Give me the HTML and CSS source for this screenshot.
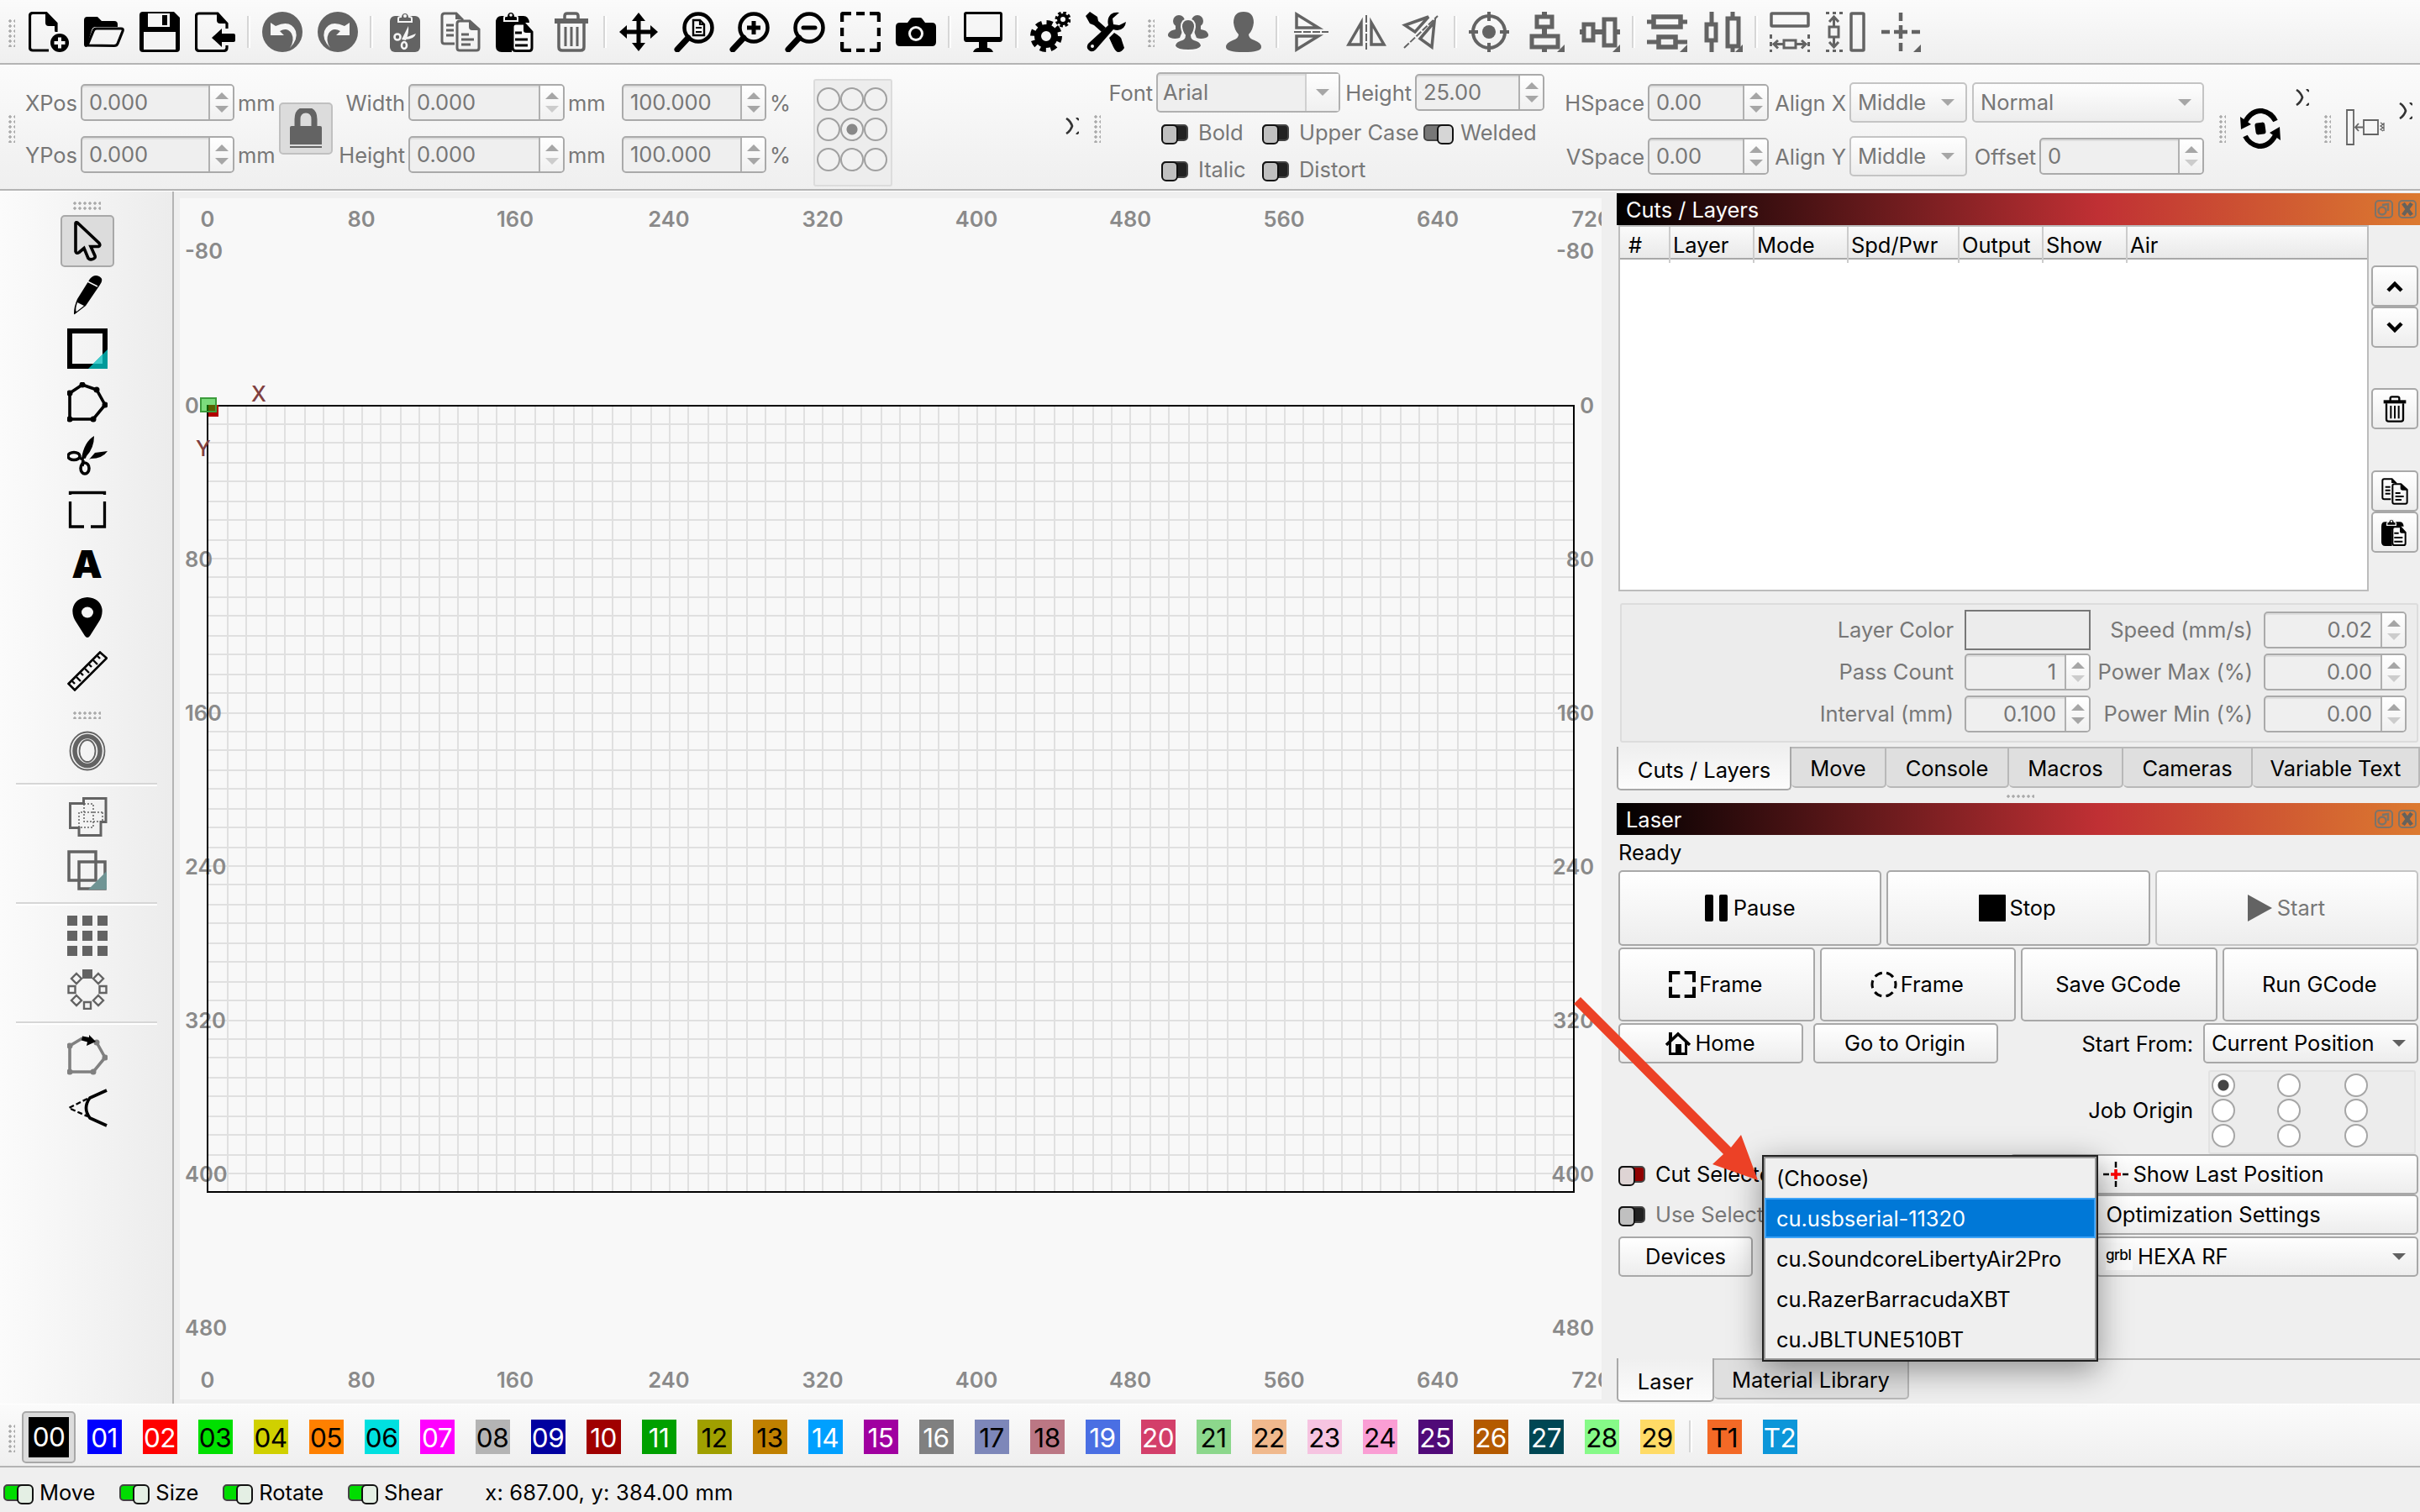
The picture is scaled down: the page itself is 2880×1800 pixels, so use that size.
FILE: index.html
```html
<!DOCTYPE html>
<html lang="en">
<head>
    <meta charset="UTF-8">
    <meta name="viewport" content="width=device-width, initial-scale=1.0">
    <title>Laser Workspace</title>
    <link rel="stylesheet" href="styles.css">
</head>
<body>
    <!-- Icon sprite -->
    <svg class="sprite" width="0" height="0">
        <symbol id="i-new" viewBox="0 0 48 48"><path d="M24 46H5q-3.500 0-3.500-3.500V5q0-3.500 3.500-3.500h16L33 14v10" fill="none" stroke="currentColor" stroke-width="3.200"/><path d="M20 1l14 14v8h-3v-6H24q-4 0-4-4z"/><circle cx="37" cy="37" r="11"/><path d="M37 30.500v13M30.500 37h13" stroke="#f4f4f4" stroke-width="4"/></symbol>
        <symbol id="i-open" viewBox="0 0 48 48"><path d="M3 42Q0 42 0 39V10q0-4 4-4h12l5 5h15q4 0 4 4v3H14q-4 0-5 4z"/><path d="M4 40l7-17q1-3 4-3h29q3 0 2 3l-6 15q-1 2.500-4 2.500z" fill="none" stroke="currentColor" stroke-width="3.200"/></symbol>
        <symbol id="i-save" viewBox="0 0 48 48"><path d="M4 0h37l7 7v37q0 4-4 4H4q-4 0-4-4V4q0-4 4-4z"/><path d="M10 2h26v16H10z" fill="#f6f6f6"/><path d="M27 4h6v12h-6z"/><path d="M5 24h38v21H5z" fill="#f3f3f3"/></symbol>
        <symbol id="i-import" viewBox="0 0 48 48"><path d="M38 20V14L27 2H5Q1.500 2 1.500 5v38q0 3.500 3.500 3.500h29q4 0 4-3.500v-3" fill="none" stroke="currentColor" stroke-width="3.200"/><path d="M26 1l13 13H30q-4 0-4-4zM20 31l12-11v6h14q2 0 2 2v6q0 2-2 2H32v6z"/></symbol>
        <symbol id="i-undo" viewBox="0 0 48 48"><circle cx="24" cy="24" r="24"/><path d="M10 13v15h16l-5-5q9-5 14 3 4 8-2 17 10-10 7-20-6-14-24-6z" fill="#f5f5f5"/></symbol>
        <symbol id="i-cut" viewBox="0 0 48 48"><rect x="6" y="5" width="36" height="43" rx="6"/><path d="M16 12V8q0-2 3-2 1-5 5-5t5 5q3 0 3 2v4z" stroke="#f5f5f5" stroke-width="2"/><circle cx="24" cy="5" r="2" fill="#f5f5f5"/><path d="M20 33l8-16q1 8-3 17zM24 31l13-5q-2 7-13 7z" fill="#f5f5f5"/><g fill="none" stroke="#f5f5f5" stroke-width="2.600"><circle cx="15" cy="30" r="3.500"/><ellipse cx="23" cy="40" rx="3" ry="4"/></g></symbol>
        <symbol id="i-copy" viewBox="0 0 48 48"><g fill="none" stroke="currentColor" stroke-width="3"><path d="M17 38H5q-3 0-3-3V5q0-3 3-3h14l8 8"/><path d="M35 11H23q-3 0-3 3v29q0 3 3 3h20q3 0 3-3V21z"/><path d="M7 16h9M7 22h9M7 28h9M25 27h9M25 33h15M25 39h11"/></g><path d="M18 1l9 8h-9zM34 10l13 12H38q-4 0-4-4z"/></symbol>
        <symbol id="i-paste" viewBox="0 0 48 48"><path d="M0 13q0-8 7-8h26q6 0 7 8H26q-7 0-7 7v28H7q-7 0-7-7z"/><path d="M10 11V7q0-2 3-2 1-5 5-5t5 5q3 0 3 2v4z" stroke="#f5f5f5" stroke-width="2"/><circle cx="18" cy="4" r="1.800" fill="#f5f5f5"/><path d="M34 14H24q-4 0-4 4v25q0 3.500 4 3.500h16q3 0 3-3.500V24z" fill="#fafafa" stroke="currentColor" stroke-width="3"/><path d="M33 13l11 12h-8q-3 0-3-3z"/><path d="M23 25h8M23 33h15M23 40h15" stroke="currentColor" stroke-width="3"/></symbol>
        <symbol id="i-trash" viewBox="0 0 48 48"><path d="M16 9V5q0-3 3-3h10q3 0 3 3v4" fill="none" stroke="currentColor" stroke-width="3.500"/><path d="M4 8h40v6H4z"/><path d="M9 14v28q0 4 4 4h22q4 0 4-4V14" fill="none" stroke="currentColor" stroke-width="3.500"/><path d="M17 18v23M24 18v23M31 18v23" stroke="currentColor" stroke-width="3"/></symbol>
        <symbol id="i-move" viewBox="0 0 48 48"><path d="M24 1l8 10h-5.500v10.500H38V16l9 8-9 8v-5.500H26.500V37H32l-8 10-8-10h5.500V26.500H10V32l-9-8 9-8v5.500h11.500V11H16z"/></symbol>
        <symbol id="i-zoom" viewBox="0 0 48 48"><circle cx="29" cy="19" r="16.500" fill="none" stroke="currentColor" stroke-width="4.500"/><path d="M17 31L4 45" stroke="currentColor" stroke-width="7" stroke-linecap="round"/></symbol>
        <symbol id="i-zoomdoc" viewBox="0 0 48 48"><use href="#i-zoom"/><path d="M23 10h8l5 5v13H23z" fill="none" stroke="currentColor" stroke-width="2.400"/><path d="M26 19h7M26 24h7M31 10v5h5" stroke="currentColor" stroke-width="2.200" fill="none"/></symbol>
        <symbol id="i-zoomin" viewBox="0 0 48 48"><use href="#i-zoom"/><path d="M29 11v16M21 19h16" stroke="currentColor" stroke-width="5"/></symbol>
        <symbol id="i-zoomout" viewBox="0 0 48 48"><use href="#i-zoom"/><path d="M22 19h14" stroke="currentColor" stroke-width="5" stroke-linecap="round"/></symbol>
        <symbol id="i-frame" viewBox="0 0 48 48"><path d="M2 12V4q0-2 2-2h9M19 2h10M35 2h9q2 0 2 2v8M46 19v10M46 36v8q0 2-2 2h-9M29 46H19M13 46H4q-2 0-2-2v-8M2 29V19" fill="none" stroke="currentColor" stroke-width="4.500"/></symbol>
        <symbol id="i-camera" viewBox="0 0 48 48"><path d="M5 13h9l3-4q1-2 4-2h8q2 0 3 2l3 4h8q5 0 5 5v18q0 5-5 5H5q-5 0-5-5V18q0-5 5-5z"/><circle cx="24" cy="26" r="9" fill="#f5f5f5"/><circle cx="24" cy="26" r="6"/></symbol>
        <symbol id="i-monitor" viewBox="0 0 48 48"><path d="M4 0h40q3 0 3 3v29q0 4-3 4H29v7q5 0 7 5H12q2-5 7-5v-7H4q-3 0-3-4V3q0-3 3-3z"/><path d="M4 3h40v27H4z" fill="#f6f6f6"/></symbol>
        <symbol id="i-gears" viewBox="0 0 48 48"><circle cx="19" cy="29" r="10" fill="none" stroke="currentColor" stroke-width="8"/><circle cx="19" cy="29" r="16" fill="none" stroke="currentColor" stroke-width="6" stroke-dasharray="7 5.570"/><circle cx="39" cy="9" r="5" fill="none" stroke="currentColor" stroke-width="4"/><circle cx="39" cy="9" r="7.500" fill="none" stroke="currentColor" stroke-width="4" stroke-dasharray="3.400 2.490"/></symbol>
        <symbol id="i-tools" viewBox="0 0 48 48"><path d="M48 12q-1 9-10 10-3 0-5-1L12 45q-4 4-8 1t-1-8L27 16q-2-8 3-13 4-3 10-2l-8 7 1 7 7 1z"/><circle cx="8" cy="41" r="2" fill="#f4f4f4"/><path d="M0 5l5-5 9 6 1 5 9 8-5 5-9-8-5-2zM28 31l6-6q9 5 9 9l3 9q-3 5-7 5-3 0-6-6z"/></symbol>
        <symbol id="i-group" viewBox="0 0 48 48"><circle cx="13" cy="11" r="7"/><circle cx="35" cy="11" r="7"/><path d="M9 15h9v6L14 31q-6 2-11 0-5-2-2-6 2-3 8-4zM30 15h9v6q7 1 8 4 3 4-2 6-6 2-11 0l-4-10z"/><g stroke="#f5f5f5" stroke-width="2"><path d="M24 9q8 0 8 9-1 7-4 10 0 5 6 6 6 2 6 7-3 5-16 5T8 41q0-5 6-7 6-1 6-6-3-3-4-10 0-9 8-9z"/></g></symbol>
        <symbol id="i-user" viewBox="0 0 48 48"><path d="M24 0q12 0 12 13-1 9-6 14 0 5 7 7 8 3 8 8 0 6-21 6T3 42q0-5 8-8 7-2 7-7-5-5-6-14Q12 0 24 0z"/></symbol>
        <symbol id="i-flipv" viewBox="0 0 48 48"><path d="M7 3v16h26zM7 45V29h26z" fill="none" stroke="currentColor" stroke-width="3.500"/><path d="M4 24h41" stroke="currentColor" stroke-width="2" stroke-dasharray="9 2"/></symbol>
        <symbol id="i-fliph" viewBox="0 0 48 48"><path d="M3 39h15V13zM45 39H30V13z" fill="none" stroke="currentColor" stroke-width="3.500"/><path d="M24 4v41" stroke="currentColor" stroke-width="2" stroke-dasharray="9 2"/></symbol>
        <symbol id="i-flipd" viewBox="0 0 48 48"><path d="M4 16l28-10-16 18zM36 42l3-30-17 20z" fill="none" stroke="currentColor" stroke-width="3.500"/><path d="M3 43L43 5" stroke="currentColor" stroke-width="2" stroke-dasharray="8 2"/></symbol>
        <symbol id="i-target" viewBox="0 0 48 48"><circle cx="24" cy="24" r="19" fill="none" stroke="currentColor" stroke-width="4"/><circle cx="24" cy="24" r="8"/><path d="M24 0v11M24 37v11M0 24h11M37 24h11" stroke="currentColor" stroke-width="4"/></symbol>
        <symbol id="i-alignv" viewBox="0 0 48 48"><path d="M24 0v7M24 20v10M24 42v6" stroke="currentColor" stroke-width="6"/><path d="M15 6h18v12H15zM9 29h31v13H9z" fill="none" stroke="currentColor" stroke-width="5"/><path d="M48 39v9h-9z"/></symbol>
        <symbol id="i-alignh" viewBox="0 0 48 48"><path d="M0 24h5M17 24h10M43 24h5" stroke="currentColor" stroke-width="6"/><path d="M5 15h11v19H5zM29 9h13v31H29z" fill="none" stroke="currentColor" stroke-width="5"/><path d="M48 39v9h-9z"/></symbol>
        <symbol id="i-distv" viewBox="0 0 48 48"><path d="M0 12h8M40 12h8M0 36h14M34 36h14" stroke="currentColor" stroke-width="5"/><path d="M8 6h32v12H8zM14 30h20v12H14z" fill="none" stroke="currentColor" stroke-width="5.500"/><path d="M48 39v9h-9z"/></symbol>
        <symbol id="i-disth" viewBox="0 0 48 48"><path d="M11 0v14M11 34v14M36 0v8M36 40v8" stroke="currentColor" stroke-width="5"/><path d="M5 15h11v19H5zM30 8h13v33H30z" fill="none" stroke="currentColor" stroke-width="5"/><path d="M48 39v9h-9z"/></symbol>
        <symbol id="i-samew" viewBox="0 0 48 48"><rect x="2" y="2" width="44" height="15" rx="1" fill="none" stroke="currentColor" stroke-width="3.500"/><path d="M17 34h14v9H17zM4 38.500h13M31 38.500h13M10 34l-5 4.500 5 5M38 34l5 4.500-5 5" fill="none" stroke="currentColor" stroke-width="3"/><path d="M1.500 27v21M46.500 27v21" stroke="currentColor" stroke-width="3" stroke-dasharray="5 4"/></symbol>
        <symbol id="i-sameh" viewBox="0 0 48 48"><rect x="31" y="2" width="15" height="44" rx="1" fill="none" stroke="currentColor" stroke-width="3.500"/><path d="M5 18h11v12H5zM10.500 6v12M10.500 30v12M5 12l5.500-6 5.500 6M5 36l5.500 6 5.500-6" fill="none" stroke="currentColor" stroke-width="3"/><path d="M1 1.500h20M1 46.500h20" stroke="currentColor" stroke-width="3" stroke-dasharray="4 4"/></symbol>
        <symbol id="i-cross" viewBox="0 0 48 48"><path d="M24 1v10M24 16v16M24 37v10M1 24h10M16 24h16M37 24h10" stroke="currentColor" stroke-width="4.500"/><path d="M48 39v9h-9z"/></symbol>
        <symbol id="i-pointer" viewBox="0 0 48 48"><path d="M10 2.500v34q1 3 4 1l6-5 5 12q2 2 5 1 4-1 3-4l-5-11h9q3-1 1-4L12 2q-2-1-2 1z" fill="none" stroke="currentColor" stroke-width="3.600"/></symbol>
        <symbol id="i-pencil" viewBox="0 0 48 48"><path d="M27 5q5-6 11-3t1 10L22 37 9 47q-1 1-1-1 0-8 4-17z"/><path d="M12 33l8 4-9 7q-2-2 1-11z" fill="#f6f6f6"/><path d="M24 8l12 6" stroke="#f6f6f6" stroke-width="1.500"/></symbol>
        <symbol id="i-rect" viewBox="0 0 48 48"><path d="M3 3h42v42H3z" fill="none" stroke="currentColor" stroke-width="6"/><path d="M48 25v23H25z" fill="#009a9a"/><path d="M42 31v11H31z" fill="#40cccc"/></symbol>
        <symbol id="i-poly" viewBox="0 0 48 48"><path d="M3 13l15-10 17 6 10 18-14 17H3z" fill="none" stroke="currentColor" stroke-width="3.600"/><circle cx="3" cy="13" r="3.500"/><circle cx="18" cy="3" r="3.500"/><circle cx="35" cy="9" r="3.500"/><circle cx="45" cy="27" r="3.500"/><circle cx="31" cy="44" r="3.500"/><circle cx="3" cy="44" r="3.500"/></symbol>
        <symbol id="i-scissors" viewBox="0 0 48 48"><path d="M17 27q3-20 15-27 0 14-9 24l-4 9zM26 28l7-8 15-2q-6 9-20 9z"/><g fill="none" stroke="currentColor" stroke-width="3.500"><ellipse cx="8" cy="24" rx="7" ry="4.500"/><ellipse cx="21" cy="38.500" rx="5" ry="6.500"/><path d="M14 26l5 2-1 8"/></g><circle cx="21" cy="28" r="1.300" fill="#f5f5f5"/></symbol>
        <symbol id="i-tabs" viewBox="0 0 48 48"><path d="M3.500 6V3.500h41V6M3.500 14v30h16.500M44.500 14v30H28" fill="none" stroke="currentColor" stroke-width="3.300"/></symbol>
        <symbol id="i-pin" viewBox="0 0 48 48"><path d="M24 0q15 1 17.500 14 1 9-5 17L27 46q-3 4-6 0l-9.500-15q-6-8-5-17Q9 1 24 0z"/><ellipse cx="24" cy="18" rx="7" ry="6.500" fill="#f5f5f5"/></symbol>
        <symbol id="i-ruler" viewBox="0 0 48 48"><path d="M1.500 39L39 1.500l8 7L9 46.500z" fill="none" stroke="currentColor" stroke-width="2.600"/><path d="M6 36l3 3M11 31l5 5M16 26l3 3M21 21l5 5M26 16l3 3M31 11l5 5M36 6l3 3" stroke="currentColor" stroke-width="2.400"/></symbol>
        <symbol id="i-offset" viewBox="0 0 48 48"><g fill="none" stroke="currentColor"><ellipse cx="24" cy="24" rx="20.500" ry="22.500" stroke-width="1.800"/><ellipse cx="24" cy="24" rx="15" ry="17.500" stroke-width="5.500"/><ellipse cx="24" cy="24" rx="9.500" ry="13" stroke-width="1.800"/></g></symbol>
        <symbol id="i-union" viewBox="0 0 48 48"><path d="M3.500 8.500h16V2.500h26.500v28h-6v16H14v-9H3.500z" fill="none" stroke="currentColor" stroke-width="3"/><path d="M20 9h11v28H14V19h28M20 9v21h22V19" fill="none" stroke="currentColor" stroke-width="1.500" stroke-dasharray="2 2"/></symbol>
        <symbol id="i-weld" viewBox="0 0 48 48"><path d="M2 2h32v34H2zM14 14h31v32H14z" fill="none" stroke="currentColor" stroke-width="3.500"/><path d="M47 25v22H25z" fill="#6f9494"/></symbol>
        <symbol id="i-grid" viewBox="0 0 48 48"><path d="M0 0h12v12H0zM18 0h12v12H18zM36 0h12v12H36zM0 18h12v12H0zM18 18h12v12H18zM36 18h12v12H36zM0 36h12v12H0zM18 36h12v12H18zM36 36h12v12H36z"/></symbol>
        <symbol id="i-radial" viewBox="0 0 48 48"><path d="M18 0h12v11H18z"/><path d="M1.500 20h8v8h-8zM38.500 20h8v8h-8zM20 39h8v8h-8zM11 5l6 6-6 6-6-6zM37 5l6 6-6 6-6-6zM11 31l6 6-6 6-6-6zM37 31l6 6-6 6-6-6z" fill="none" stroke="currentColor" stroke-width="2.400"/></symbol>
        <symbol id="i-startpt" viewBox="0 0 48 48"><g color="#808080" fill="currentColor"><path d="M18 4L3 13v31h28l14-17L35 9" fill="none" stroke="currentColor" stroke-width="3.600"/><circle cx="3" cy="13" r="3.500"/><circle cx="35" cy="9" r="3.500"/><circle cx="45" cy="27" r="3.500"/><circle cx="31" cy="44" r="3.500"/><circle cx="3" cy="44" r="3.500"/></g><path d="M18 1.500l8 1.500V0l8 8-11 5 1-4.500-7-2z"/></symbol>
        <symbol id="i-radius" viewBox="0 0 48 48"><path d="M47 2L27 11q-9 12 0 24l20 9" fill="none" stroke="currentColor" stroke-width="3.600"/><path d="M24 12L2 23l22 10" fill="none" stroke="currentColor" stroke-width="2.400" stroke-dasharray="6 3"/></symbol>
        <symbol id="i-lock" viewBox="0 0 48 48"><path d="M14 24V13q0-11 10-11t10 11v11" fill="none" stroke="currentColor" stroke-width="7"/><path d="M5 23q0-2 2-2h34q2 0 2 2v20H5zM5 45h38v2H5z"/></symbol>
        <symbol id="i-refresh" viewBox="0 0 48 48"><path d="M4 20Q12 2 26 3q11 2 16 12M44 28Q36 46 22 45 11 43 6 33" fill="none" stroke="currentColor" stroke-width="6"/><path d="M0 10l1 15 12-6zM48 38l-1-16-12 7z"/><rect x="18" y="17" width="12" height="14" rx="3" transform="rotate(-8 24 24)"/></symbol>
        <symbol id="i-dock" viewBox="0 0 48 44"><path d="M2 1h8v41H2zM22 13h17v17H22zM12 21.500h9M16 17l-4 4.500 4 4.500" fill="none" stroke="currentColor" stroke-width="1.800"/><path d="M42 16l3 2-3 2 3 2-3 2 3 2M46 16v10" fill="none" stroke="currentColor" stroke-width="1.300"/></symbol>
        <symbol id="i-more" viewBox="0 0 16 20"><path d="M1 1q5 3 7 9-2 6-7 9" fill="none" stroke="#333" stroke-width="2.600"/><path d="M13 0l3 3M13 20l3-3" stroke="#333" stroke-width="2.400"/></symbol>
        <symbol id="i-up" viewBox="0 0 20 14"><path d="M2 12l8-8 8 8" fill="none" stroke="currentColor" stroke-width="4.500"/></symbol>
        <symbol id="i-down" viewBox="0 0 20 14"><path d="M2 2l8 8 8-8" fill="none" stroke="currentColor" stroke-width="4.500"/></symbol>
        <symbol id="i-float" viewBox="0 0 22 22"><rect x="1" y="1" width="20" height="20" rx="4" fill="none" stroke="#7b746a" stroke-width="2"/><circle cx="9" cy="13" r="4.500" fill="none" stroke="#7b746a" stroke-width="2.400"/><path d="M9 6l7-1v8" fill="none" stroke="#7b746a" stroke-width="2.400"/></symbol>
        <symbol id="i-close" viewBox="0 0 22 22"><rect x="1" y="1" width="20" height="20" rx="4" fill="none" stroke="#7b746a" stroke-width="2"/><path d="M6 4l10 14M16 4L6 18" stroke="#66625c" stroke-width="4.500"/></symbol>
        <symbol id="i-circleframe" viewBox="0 0 48 48"><circle cx="24" cy="24" r="21" fill="none" stroke="currentColor" stroke-width="4.500" stroke-dasharray="14 7.990" stroke-dashoffset="7"/></symbol>
        <symbol id="i-home" viewBox="0 0 32 28"><path d="M2 16L16 3l14 13" fill="none" stroke="currentColor" stroke-width="3.600"/><path d="M6.500 13v13.500h19V13" fill="none" stroke="currentColor" stroke-width="3"/><path d="M5 1h4v10H5zM13 15h7v12h-7z"/></symbol>
    </svg>

    <!-- Main toolbar -->
    <div class="toolbar main-toolbar">
        <i class="grip"></i>
        <svg class="tool"><use href="#i-new"/></svg>
        <svg class="tool"><use href="#i-open"/></svg>
        <svg class="tool"><use href="#i-save"/></svg>
        <svg class="tool"><use href="#i-import"/></svg>
        <i class="sep"></i>
        <svg class="tool dim"><use href="#i-undo"/></svg>
        <svg class="tool dim flip"><use href="#i-undo"/></svg>
        <i class="sep"></i>
        <svg class="tool dim"><use href="#i-cut"/></svg>
        <svg class="tool dim"><use href="#i-copy"/></svg>
        <svg class="tool"><use href="#i-paste"/></svg>
        <svg class="tool dim"><use href="#i-trash"/></svg>
        <i class="sep"></i>
        <svg class="tool"><use href="#i-move"/></svg>
        <svg class="tool"><use href="#i-zoomdoc"/></svg>
        <svg class="tool"><use href="#i-zoomin"/></svg>
        <svg class="tool"><use href="#i-zoomout"/></svg>
        <svg class="tool"><use href="#i-frame"/></svg>
        <svg class="tool"><use href="#i-camera"/></svg>
        <i class="sep"></i>
        <svg class="tool"><use href="#i-monitor"/></svg>
        <i class="sep"></i>
        <svg class="tool"><use href="#i-gears"/></svg>
        <svg class="tool"><use href="#i-tools"/></svg>
        <i class="grip mid"></i>
        <svg class="tool dim"><use href="#i-group"/></svg>
        <svg class="tool dim"><use href="#i-user"/></svg>
        <i class="sep"></i>
        <svg class="tool dim"><use href="#i-flipv"/></svg>
        <svg class="tool dim"><use href="#i-fliph"/></svg>
        <svg class="tool dim"><use href="#i-flipd"/></svg>
        <i class="sep"></i>
        <svg class="tool dim"><use href="#i-target"/></svg>
        <svg class="tool dim"><use href="#i-alignv"/></svg>
        <svg class="tool dim"><use href="#i-alignh"/></svg>
        <i class="sep"></i>
        <svg class="tool dim"><use href="#i-distv"/></svg>
        <svg class="tool dim"><use href="#i-disth"/></svg>
        <i class="sep"></i>
        <svg class="tool dim"><use href="#i-samew"/></svg>
        <svg class="tool dim"><use href="#i-sameh"/></svg>
        <svg class="tool dim"><use href="#i-cross"/></svg>
    </div>

    <!-- Numeric edits and text options -->
    <div class="toolbar edit-toolbar">
        <i class="grip"></i>
        <div class="numeric">
            <label>XPos</label>
            <div class="spin"><span>0.000</span><i class="steps"></i></div>
            <span class="unit">mm</span>
            <div class="lock"><svg class="icon dim"><use href="#i-lock"/></svg></div>
            <label>Width</label>
            <div class="spin"><span>0.000</span><i class="steps min"></i></div>
            <span class="unit">mm</span>
            <div class="spin"><span>100.000</span><i class="steps"></i></div>
            <span class="unit">%</span>
            <label>YPos</label>
            <div class="spin"><span>0.000</span><i class="steps"></i></div>
            <span class="unit">mm</span>
            <label>Height</label>
            <div class="spin"><span>0.000</span><i class="steps min"></i></div>
            <span class="unit">mm</span>
            <div class="spin"><span>100.000</span><i class="steps"></i></div>
            <span class="unit">%</span>
        </div>
        <div class="anchor">
            <i></i><i></i><i></i>
            <i></i><i class="on"></i><i></i>
            <i></i><i></i><i></i>
        </div>
        <svg class="more more-a"><use href="#i-more"/></svg>
        <i class="grip"></i>
        <div class="text-options">
            <div class="font-row">
                <label>Font</label>
                <div class="combo edit"><span>Arial</span><i class="arrow"></i></div>
                <label>Height</label>
                <div class="spin"><span>25.00</span><i class="steps"></i></div>
            </div>
            <div class="switches">
                <div class="check"><i class="switch"></i>Bold</div>
                <div class="check"><i class="switch"></i>Upper Case</div>
                <div class="check"><i class="switch on"></i>Welded</div>
                <div class="check"><i class="switch"></i>Italic</div>
                <div class="check"><i class="switch"></i>Distort</div>
            </div>
        </div>
        <div class="spacing">
            <label>HSpace</label>
            <div class="spin"><span>0.00</span><i class="steps"></i></div>
            <label>Align X</label>
            <div class="combo"><span>Middle</span><i class="arrow"></i></div>
            <div class="combo wide"><span>Normal</span><i class="arrow"></i></div>
            <label>VSpace</label>
            <div class="spin"><span>0.00</span><i class="steps"></i></div>
            <label>Align Y</label>
            <div class="combo"><span>Middle</span><i class="arrow"></i></div>
            <div class="offset">
                <label>Offset</label>
                <div class="spin"><span>0</span><i class="steps min"></i></div>
            </div>
        </div>
        <i class="grip grip-r"></i>
        <svg class="icon refresh"><use href="#i-refresh"/></svg>
        <svg class="more more-b"><use href="#i-more"/></svg>
        <i class="grip grip-r"></i>
        <svg class="icon dock dim"><use href="#i-dock"/></svg>
        <svg class="more more-c"><use href="#i-more"/></svg>
    </div>

    <div class="workspace">
        <!-- Drawing tools -->
        <div class="side-toolbar">
            <i class="grip-h"></i>
            <div class="side-tool active"><svg class="icon"><use href="#i-pointer"/></svg></div>
            <div class="side-tool"><svg class="icon"><use href="#i-pencil"/></svg></div>
            <div class="side-tool"><svg class="icon"><use href="#i-rect"/></svg></div>
            <div class="side-tool"><svg class="icon"><use href="#i-poly"/></svg></div>
            <div class="side-tool"><svg class="icon"><use href="#i-scissors"/></svg></div>
            <div class="side-tool"><svg class="icon"><use href="#i-tabs"/></svg></div>
            <div class="side-tool letter">A</div>
            <div class="side-tool"><svg class="icon"><use href="#i-pin"/></svg></div>
            <div class="side-tool"><svg class="icon"><use href="#i-ruler"/></svg></div>
            <i class="grip-h second"></i>
            <div class="side-tool dim"><svg class="icon"><use href="#i-offset"/></svg></div>
            <i class="rule"></i>
            <div class="side-tool dim"><svg class="icon"><use href="#i-union"/></svg></div>
            <div class="side-tool dim"><svg class="icon"><use href="#i-weld"/></svg></div>
            <i class="rule"></i>
            <div class="side-tool dim"><svg class="icon"><use href="#i-grid"/></svg></div>
            <div class="side-tool dim"><svg class="icon"><use href="#i-radial"/></svg></div>
            <i class="rule"></i>
            <div class="side-tool"><svg class="icon"><use href="#i-startpt"/></svg></div>
            <div class="side-tool"><svg class="icon"><use href="#i-radius"/></svg></div>
        </div>

        <svg class="canvas" id="canvas" width="1692" height="1430" viewBox="214 236 1692 1430"></svg>

        <div class="panels">
            <div class="title-bar">Cuts / Layers<span><svg><use href="#i-float"/></svg><svg><use href="#i-close"/></svg></span></div>
            <div class="cuts">
                <div class="cut-table">
                    <div class="cut-head">
                        <span>#</span><span>Layer</span><span>Mode</span><span>Spd/Pwr</span><span>Output</span><span>Show</span><span>Air</span>
                    </div>
                </div>
                <div class="cut-buttons">
                    <div class="btn"><svg class="chev"><use href="#i-up"/></svg></div>
                    <div class="btn"><svg class="chev"><use href="#i-down"/></svg></div>
                    <div class="btn gap-a"><svg class="small"><use href="#i-trash"/></svg></div>
                    <div class="btn gap-b"><svg class="small"><use href="#i-copy"/></svg></div>
                    <div class="btn"><svg class="small"><use href="#i-paste"/></svg></div>
                </div>
            </div>
            <div class="layer-form">
                <label>Layer Color</label><div class="swatch"></div>
                <label>Speed (mm/s)</label><div class="spin right"><span>0.02</span><i class="steps min"></i></div>
                <label>Pass Count</label><div class="spin right"><span>1</span><i class="steps min"></i></div>
                <label>Power Max (%)</label><div class="spin right"><span>0.00</span><i class="steps min"></i></div>
                <label>Interval (mm)</label><div class="spin right"><span>0.100</span><i class="steps"></i></div>
                <label>Power Min (%)</label><div class="spin right"><span>0.00</span><i class="steps min"></i></div>
            </div>
            <div class="tabs">
                <div class="tab active w-cuts">Cuts / Layers</div>
                <div class="tab w-move">Move</div>
                <div class="tab w-console">Console</div>
                <div class="tab w-macros">Macros</div>
                <div class="tab w-cameras">Cameras</div>
                <div class="tab w-vartext">Variable Text</div>
            </div>
            <div class="splitter"><i></i></div>

            <div class="title-bar">Laser<span><svg><use href="#i-float"/></svg><svg><use href="#i-close"/></svg></span></div>
            <div class="laser">
                <div class="status">Ready</div>
                <div class="row run">
                    <div class="btn"><svg class="glyph" viewBox="0 0 32 32"><rect x="2" width="10" height="32" rx="2"/><rect x="19" width="10" height="32" rx="2"/></svg>Pause</div>
                    <div class="btn"><svg class="glyph stop" viewBox="0 0 32 32"><rect width="32" height="32" rx="1"/></svg>Stop</div>
                    <div class="btn off"><svg class="glyph" viewBox="0 0 32 32"><path d="M1 0l29 16L1 32z"/></svg>Start</div>
                </div>
                <div class="row code">
                    <div class="btn"><svg class="glyph frame" viewBox="0 0 48 48"><path d="M3 20V3h17M28 3h17v17M45 28v17H28M20 45H3V28" fill="none" stroke="currentColor" stroke-width="6"/></svg>Frame</div>
                    <div class="btn"><svg class="glyph frame"><use href="#i-circleframe"/></svg>Frame</div>
                    <div class="btn">Save GCode</div>
                    <div class="btn">Run GCode</div>
                </div>
                <div class="row home">
                    <div class="btn"><svg class="glyph house"><use href="#i-home"/></svg>Home</div>
                    <div class="btn">Go to Origin</div>
                    <label>Start From:</label>
                    <div class="combo dark"><span>Current Position</span><i class="arrow"></i></div>
                </div>
                <div class="row origin">
                    <label>Job Origin</label>
                    <div class="radios">
                        <i class="on"></i><i></i><i></i>
                        <i></i><i></i><i></i>
                        <i></i><i></i><i></i>
                    </div>
                </div>
                <div class="row opts">
                    <div class="check black"><i class="switch red"></i>Cut Selected</div>
                    <div class="btn"><svg class="glyph" viewBox="0 0 32 32"><path d="M16 1v7M16 24v7M1 16h7M24 16h7" stroke="#000" stroke-width="2.500"/><path d="M16 10v12M10 16h12" stroke="#f00" stroke-width="3.600"/></svg>Show Last Position</div>
                </div>
                <div class="row opts">
                    <div class="check"><i class="switch"></i>Use Selection</div>
                    <div class="btn">Optimization Settings</div>
                </div>
                <div class="row device">
                    <div class="btn">Devices</div>
                    <div class="combo dark"><b>grbl</b><span>HEXA RF</span><i class="arrow"></i></div>
                </div>
            </div>
            <div class="tabs bottom">
                <div class="tab active w-laser">Laser</div>
                <div class="tab w-library">Material Library</div>
            </div>
        </div>
    </div>

    <!-- Layer palette -->
    <div class="palette" id="palette"><i class="grip"></i></div>

    <div class="status-bar">
        <div class="check black"><i class="switch green"></i>Move</div>
        <div class="check black"><i class="switch green"></i>Size</div>
        <div class="check black"><i class="switch green"></i>Rotate</div>
        <div class="check black"><i class="switch green"></i>Shear</div>
        <span class="coords">x: 687.00, y: 384.00 mm</span>
    </div>

    <!-- Port list -->
    <div class="port-menu">
        <div>(Choose)</div>
        <div class="selected">cu.usbserial-11320</div>
        <div>cu.SoundcoreLibertyAir2Pro</div>
        <div>cu.RazerBarracudaXBT</div>
        <div>cu.JBLTUNE510BT</div>
    </div>

    <svg class="pointer-arrow" width="230" height="230" viewBox="1870 1184 230 230">
        <path d="M1881 1187L2060 1366l12-15 20 54-54-19 13-12L1873 1195z" fill="#ec4126"/>
    </svg>

    <script src="script.js"></script>
</body>
</html>
```
FILE: styles.css
```css
/* Reset and base styles */
* {
    box-sizing: border-box;
    margin: 0;
    padding: 0;
}

body {
    width: 2880px;
    height: 1800px;
    overflow: hidden;
    position: relative;
    font-family: Inter, "Liberation Sans", sans-serif;
    font-size: 25.5px;
    line-height: 32px;
    letter-spacing: -0.05px;
    color: #000;
    background: #efefef;
    white-space: nowrap;
}

svg {
    display: block;
    fill: currentColor;
    flex: none;
}

i {
    flex: none;
    font-style: normal;
}

.sprite {
    position: absolute;
}

.icon {
    width: 48px;
    height: 48px;
}

.dim {
    color: #636363;
}

/* Toolbars */
.toolbar {
    display: flex;
    background: linear-gradient(#fbfbfb, #efefef);
    border-bottom: 2px solid #b4b4b4;
}

.main-toolbar {
    height: 77px;
    align-items: flex-start;
    padding-top: 14px;
}

.tool {
    width: 48px;
    height: 48px;
    margin: 0 9px;
}

.flip {
    transform: scaleX(-1);
}

.grip {
    width: 8px;
    height: 34px;
    margin: 8px 7px 0 10px;
    background: conic-gradient(#b9b9b9 25%, transparent 0) -1px 1px / 6px 6px;
    background: linear-gradient(90deg, #fafafa 0, transparent 0), repeating-conic-gradient(transparent 0 75%, #bbb 0 100%) -1px -1px / 6px 6px;
    background: radial-gradient(circle, #aaa 1.5px, transparent 1.8px) -1px 0 / 6px 6px;
}

.grip.mid {
    margin: 8px 7px 0 17px;
}

.sep {
    width: 4px;
    height: 38px;
    margin: 5px 5px 0;
    border-left: 2px solid #d6d6d6;
    border-right: 2px solid #fff;
}

.edit-toolbar {
    height: 150px;
    border-top: 1px solid #fff;
    color: #777;
}

.edit-toolbar .grip {
    margin: 58px 0 0 10px;
}

.edit-toolbar label {
    text-align: right;
    padding: 1px 4px 0 0;
}

/* Spin boxes and combos */
.spin {
    display: flex;
    height: 44px;
    border: 2px solid #aaa;
    border-radius: 5px;
    background: #efefef;
    box-shadow: inset 0 2px 0 #dedede;
    color: #777;
    line-height: 40px;
    overflow: hidden;
}

.spin span {
    flex: 1;
    padding-left: 8px;
}

.spin.right span {
    text-align: right;
    padding: 0 10px 0 0;
}

.steps {
    width: 29px;
    border-left: 2px solid #b0b0b0;
    background: linear-gradient(#fff, #f0f0f0);
    display: flex;
    flex-direction: column;
    align-items: center;
    gap: 8px;
    padding-top: 8px;
}

.steps::before {
    content: "";
    border: 8px solid transparent;
    border-top: 0;
    border-bottom: 8px solid #a6a6a6;
}

.steps::after {
    content: "";
    border: 8px solid transparent;
    border-bottom: 0;
    border-top: 8px solid #a6a6a6;
}

.steps.min::after {
    border-top-color: #ccc;
}

.combo {
    display: flex;
    align-items: center;
    height: 48px;
    padding: 0 13px 0 8px;
    border: 2px solid #c4c4c4;
    border-radius: 5px;
    background: linear-gradient(#fefefe, #ededed);
}

.combo span {
    flex: 1;
}

.combo .arrow {
    border: 8px solid transparent;
    border-bottom: 0;
    border-top: 8px solid #a6a6a6;
}

.combo.dark {
    border-color: #a8a8a8;
}

.combo.dark .arrow {
    border-top-color: #606060;
}

.combo.edit {
    width: 219px;
    padding: 0 0 0 6px;
    background: #efefef;
    border-color: #b0b0b0;
    box-shadow: inset 0 2px 0 #dedede;
}

.combo.edit .arrow {
    width: 40px;
    height: 44px;
    border: 0;
    border-left: 2px solid #d0d0d0;
    background: linear-gradient(#fefefe, #f0f0f0);
    display: flex;
    align-items: center;
    justify-content: center;
}

.combo.edit .arrow::before {
    content: "";
    border: 8px solid transparent;
    border-bottom: 0;
    border-top: 8px solid #a6a6a6;
}

/* Numeric edits */
.numeric {
    display: grid;
    grid-template-columns: 78px 183px 53px 64px 90px 186px 68px 172px 56px;
    grid-template-rows: 44px 44px;
    row-gap: 18px;
    align-items: center;
    padding-top: 22px;
    height: 128px;
}

.numeric .unit {
    padding: 1px 0 0 4px;
}

.lock {
    grid-column: 4;
    grid-row: 1 / 3;
    width: 64px;
    height: 62px;
    border: 2px solid #c0c0c0;
    border-radius: 5px;
    background: #dcdcdc;
    display: flex;
    align-items: center;
    justify-content: center;
}

.anchor {
    width: 94px;
    height: 128px;
    margin-top: 16px;
    padding: 8px 2px;
    border: 2px solid #dcdcdc;
    border-radius: 3px;
    background: #ededed;
    display: grid;
    grid-template-columns: repeat(3, 28px);
    grid-template-rows: repeat(3, 28px);
    row-gap: 8px;
}

.anchor i {
    width: 28px;
    height: 28px;
    border: 2px solid #a0a0a0;
    border-radius: 50%;
    background: #f1f1f1;
}

.anchor .on {
    background: radial-gradient(circle, #888 6px, #f1f1f1 7px);
}

.more {
    width: 16px;
    height: 20px;
}

.more-a {
    margin: 62px 8px 0 206px;
}

.more-b {
    margin: 28px 0 0 18px;
}

.more-c {
    margin: 44px 0 0 16px;
}

.text-options {
    width: 531px;
    padding-top: 8px;
}

.font-row {
    display: flex;
    align-items: center;
}

.font-row label {
    width: 66px;
}

.font-row .combo + label {
    width: 89px;
}

.font-row .spin {
    width: 154px;
}

.switches {
    display: grid;
    grid-template-columns: 120px 192px auto;
    grid-auto-rows: 44px;
    padding: 2px 0 0 72px;
}

.check {
    display: flex;
    align-items: center;
    gap: 12px;
    color: #777;
}

.check.black {
    color: #000;
}

/* Toggle switches */
.switch {
    position: relative;
    width: 32px;
    height: 20px;
    border-radius: 5px;
    border: 2px solid #444;
    background: #222;
}

.switch::before {
    content: "";
    position: absolute;
    left: -2px;
    top: -2px;
    width: 16px;
    height: 20px;
    border: 2px solid #111;
    border-radius: 6px;
    background: #c0c0c0;
}

.switch.on::before,
.switch.green::before {
    left: 14px;
    background: #d6d6d6;
}

.switch.on {
    background: #777;
}

.switch.green {
    background: #00dd00;
}

.switch.green::before {
    background: #e4efe4;
}

.switch.red {
    background: #900000;
}

.switch.red::before {
    background: #ded4d4;
}

.spacing {
    display: grid;
    grid-template-columns: 120px 144px 96px 146px 276px;
    grid-template-rows: 48px 48px;
    row-gap: 16px;
    align-items: center;
    padding-top: 20px;
    height: 140px;
}

.spacing .combo {
    width: 140px;
}

.spacing .combo.wide {
    width: 276px;
}

.offset {
    display: flex;
    align-items: center;
}

.offset label {
    width: 80px;
}

.offset .spin {
    width: 196px;
}

.edit-toolbar .grip-r {
    margin-left: 18px;
}

.refresh {
    margin: 51px 0 0 17px;
    color: #000;
}

.dock {
    width: 48px;
    height: 44px;
    margin: 52px 0 0 17px;
}

/* Workspace */
.workspace {
    display: flex;
    height: 1444px;
    border-top: 1px solid #fff;
}

.side-toolbar {
    width: 207px;
    border-right: 2px solid #b4b4b4;
    background: linear-gradient(90deg, #fbfbfb, #ececec);
    padding-top: 11px;
    display: flex;
    flex-direction: column;
    align-items: center;
}

.grip-h {
    width: 34px;
    height: 11px;
    margin-bottom: 6px;
    background: radial-gradient(circle, #aaa 1.5px, transparent 1.8px) 0 0 / 6px 6px;
}

.side-tool {
    width: 64px;
    height: 62px;
    margin-bottom: 2px;
    margin-left: 2px;
    display: flex;
    align-items: center;
    justify-content: center;
    border: 2px solid transparent;
    border-radius: 5px;
}

.side-tool.active {
    background: #dcdcdc;
    border-color: #a8a8a8;
}

.side-tool.letter {
    font-weight: 900;
    font-size: 46px;
}

.grip-h.second {
    margin: 14px 0 7px;
    height: 10px;
}

.side-toolbar .rule {
    width: 168px;
    height: 4px;
    margin: 5px 0;
    border-top: 2px solid #d6d6d6;
    border-bottom: 2px solid #fff;
}

.canvas {
    margin: 8px 0 0 7px;
    background: #f8f8f8;
}

.canvas text {
    font-size: 25.5px;
    font-weight: 600;
    letter-spacing: 0;
    fill: #8a8a8a;
}

.canvas .axis {
    font-weight: 500;
    fill: #804040;
}

/* Docked panels */
.panels {
    width: 956px;
    margin-left: 18px;
    padding-top: 2px;
}

.title-bar {
    height: 38px;
    padding: 0 4px 0 11px;
    line-height: 39px;
    color: #fff;
    background: linear-gradient(90deg, #000, #c03034 60%, #dc7a30);
    display: flex;
    justify-content: space-between;
    align-items: center;
}

.title-bar span {
    display: flex;
    gap: 6px;
}

.title-bar svg {
    width: 22px;
    height: 22px;
}

.cuts {
    display: flex;
    height: 436px;
    padding-left: 2px;
}

.cut-table {
    width: 893px;
    border: 2px solid #bcbcbc;
    background: #fff;
}

.cut-head {
    display: grid;
    grid-template-columns: 58px 100px 112px 132px 100px 100px auto;
    height: 39px;
    line-height: 43px;
    border-bottom: 2px solid #a8a8a8;
    background: linear-gradient(#fbfbfb, #e9e9e9);
}

.cut-head span {
    padding-left: 3px;
    border-left: 2px solid #ccc;
}

.cut-head span:first-child {
    padding-left: 10px;
    border-left: 0;
}

.cut-buttons {
    margin-left: 3px;
    padding-top: 48px;
}

.btn {
    display: flex;
    align-items: center;
    justify-content: center;
    border: 2px solid #a8a8a8;
    border-radius: 5px;
    background: linear-gradient(#fff, #ededed);
}

.cut-buttons .btn {
    width: 56px;
    height: 49px;
}

.cut-buttons .gap-a {
    margin-top: 48px;
}

.cut-buttons .gap-b {
    margin-top: 49px;
}

.chev {
    width: 20px;
    height: 14px;
}

.small {
    width: 32px;
    height: 32px;
}

.layer-form {
    width: 950px;
    height: 166px;
    margin: 14px 0 0 4px;
    padding: 8px 12px 0 0;
    border: 2px solid #dcdcdc;
    border-radius: 3px;
    background: #ececec;
    display: grid;
    grid-template-columns: 408px 150px 206px 170px;
    grid-auto-rows: 44px;
    row-gap: 6px;
    align-items: center;
    color: #777;
}

.layer-form label {
    text-align: right;
    padding-right: 13px;
}

.swatch {
    height: 48px;
    border: 2px solid #777;
}

/* Tabs */
.tabs {
    display: flex;
    align-items: flex-start;
    height: 52px;
    margin-top: 5px;
    background: linear-gradient(#b4b4b4, #b4b4b4) 0 0 / 100% 2px no-repeat;
}

.tab {
    height: 49px;
    border: 2px solid #b8b8b8;
    border-left: 0;
    border-radius: 0 0 5px 5px;
    background: #dfdfdf;
    text-align: center;
    line-height: 48px;
}

.tab.active {
    height: 52px;
    border: 2px solid #a8a8a8;
    border-top: 0;
    background: linear-gradient(#efefef, #fcfcfc);
    line-height: 56px;
}

.w-cuts { width: 208px; }
.w-move { width: 113px; }
.w-console { width: 146px; }
.w-macros { width: 136px; }
.w-cameras { width: 154px; }
.w-vartext { width: 199px; }
.w-laser { width: 116px; }
.w-library { width: 232px; }

.splitter {
    height: 15px;
    padding: 4px 0 0 463px;
}

.splitter i {
    display: block;
    width: 34px;
    height: 6px;
    background: radial-gradient(circle, #aaa 1.5px, transparent 1.8px) 0 0 / 6px 6px;
}

/* Laser panel */
.laser {
    height: 623px;
    padding-left: 2px;
}

.status {
    height: 42px;
    line-height: 42px;
}

.row {
    display: flex;
    width: 952px;
    margin-bottom: 2px;
}

.run {
    height: 90px;
    gap: 6px;
}

.code {
    height: 88px;
    gap: 6px;
}

.run .btn,
.code .btn {
    flex: 1 1 0;
}

.run .btn,
.code .btn,
.home .btn,
.opts .btn {
    padding-right: 2px;
}

.btn.off {
    color: #777;
    border-color: #c4c4c4;
}

.btn.off svg {
    color: #636363;
}

.glyph {
    width: 32px;
    height: 32px;
    margin-right: 4px;
}

.house {
    height: 28px;
}

.home {
    height: 48px;
}

.home .btn {
    width: 220px;
    margin-right: 12px;
}

.home label {
    width: 232px;
    padding-right: 12px;
    line-height: 49px;
    text-align: right;
}

.home .combo {
    width: 256px;
}

.origin {
    height: 98px;
    margin: 8px 0 2px;
}

.origin label {
    width: 702px;
    padding-right: 18px;
    line-height: 95px;
    text-align: right;
}

.radios {
    width: 247px;
    height: 100px;
    padding: 2px;
    border: 2px solid #e2e2e2;
    border-radius: 3px;
    background: #ececec;
    display: grid;
    grid-template-columns: 78px 80px 80px;
    grid-auto-rows: 30px;
}

.radios i {
    width: 28px;
    height: 28px;
    border: 2px solid #a6a6a6;
    border-radius: 50%;
    background: #fff;
}

.radios .on {
    background: radial-gradient(circle, #444 6px, #fff 7px);
}

.opts {
    height: 48px;
    margin-bottom: 0;
}

.opts .check {
    width: 466px;
}

.opts .btn {
    flex: 1;
}

.device {
    height: 48px;
    margin-top: 2px;
    justify-content: space-between;
}

.device .btn {
    width: 160px;
}

.device .combo {
    width: 384px;
    padding-left: 10px;
}

.device b {
    width: 32px;
    height: 32px;
    margin-right: 6px;
    background: #fafafa;
    font-weight: 500;
    font-size: 17px;
    letter-spacing: -0.5px;
    line-height: 28px;
}

.tabs.bottom {
    margin-top: 0;
}

/* Palette */
.palette {
    display: flex;
    height: 76px;
    border-top: 1px solid #fff;
    border-bottom: 2px solid #b4b4b4;
    background: linear-gradient(#fbfbfb, #efefef);
}

.palette .grip {
    margin: 23px 6px 0 10px;
}

.color {
    width: 41px;
    height: 41px;
    margin: 18px 12.5px 0;
    font-size: 31.5px;
    letter-spacing: -0.5px;
    line-height: 43px;
    text-align: center;
}

.color.current {
    width: 64px;
    height: 62px;
    margin: 8px 1px 0 2px;
    border: 2px solid #a8a8a8;
    border-radius: 5px;
    padding: 5px 6px;
    background-color: #dcdcdc;
}

.color.current span {
    display: block;
    height: 48px;
    line-height: 48px;
    background: #000;
}

.palette .sep {
    margin: 19px 5px 0;
}

/* Status bar */
.status-bar {
    display: flex;
    align-items: center;
    height: 53px;
    padding: 6px 0 0 4px;
}

.status-bar .check {
    gap: 11px;
    margin-right: 29px;
}

.coords {
    margin-left: 21px;
    letter-spacing: 0.2px;
}

/* Port list popup */
.port-menu {
    position: absolute;
    left: 2097px;
    top: 1375px;
    width: 400px;
    height: 246px;
    padding: 1px;
    border: 2px solid #222;
    background: #efefef;
    box-shadow: inset 0 0 0 2px #999, 0 10px 36px rgba(0, 0, 0, 0.4);
}

.port-menu div {
    height: 48px;
    padding-left: 14px;
    line-height: 50px;
}

.port-menu .selected {
    padding-left: 12px;
    color: #fff;
    background: #0078d7;
    border: 2px solid #3ba3f8;
    line-height: 46px;
}

.pointer-arrow {
    position: absolute;
    left: 1870px;
    top: 1184px;
}
```
FILE: script.js
```js
// Layer colors: label, background, text
const layers = [
    ["01", "#0000ff", "#fff"], ["02", "#ff0000", "#fff"], ["03", "#00e000", "#000"],
    ["04", "#d0d000", "#000"], ["05", "#ff8000", "#000"], ["06", "#00e0e0", "#000"],
    ["07", "#ff00ff", "#fff"], ["08", "#b4b4b4", "#000"], ["09", "#0000a0", "#fff"],
    ["10", "#a00000", "#fff"], ["11", "#00a000", "#fff"], ["12", "#a0a000", "#000"],
    ["13", "#c08000", "#000"], ["14", "#00a0ff", "#fff"], ["15", "#a000a0", "#fff"],
    ["16", "#808080", "#fff"], ["17", "#7d87b9", "#000"], ["18", "#bb7784", "#000"],
    ["19", "#4a6fe3", "#fff"], ["20", "#d33f6a", "#fff"], ["21", "#8cd78c", "#000"],
    ["22", "#f0b98d", "#000"], ["23", "#f6c4e1", "#000"], ["24", "#fa9ed4", "#000"],
    ["25", "#500a78", "#fff"], ["26", "#b45a00", "#fff"], ["27", "#004754", "#fff"],
    ["28", "#86fa88", "#000"], ["29", "#ffdb66", "#000"]
];
const toolLayers = [["T1", "#f36926", "#000"], ["T2", "#0c96d9", "#fff"]];

function swatch([name, bg, fg]) {
    return `<div class="color" style="background:${bg};color:${fg}">${name}</div>`;
}

document.getElementById("palette").innerHTML +=
    `<div class="color current" style="color:#fff"><span>00</span></div>` +
    layers.map(swatch).join("") + `<i class="sep"></i>` + toolLayers.map(swatch).join("");

// Work area grid, 10 mm steps
const STEP = 22.875;
const LEFT = 246, TOP = 482, RIGHT = 1872, BOTTOM = 1418;
let out = "";

for (let i = 1; i < 71; i++) {
    const x = 2 * Math.ceil((LEFT + i * STEP) / 2);
    out += `<rect x="${x}" y="${TOP}" width="2" height="${BOTTOM - TOP}" fill="#e0e0e0"/>`;
}
for (let i = 1; i < 41; i++) {
    const y = 2 * Math.floor((TOP + i * STEP) / 2);
    out += `<rect x="${LEFT}" y="${y}" width="${RIGHT - LEFT}" height="2" fill="#e0e0e0"/>`;
}

// Rulers
for (let mm = 0; mm <= 720; mm += 80) {
    const x = 247 + mm * STEP / 10;
    out += `<text x="${x}" y="270" text-anchor="middle">${mm}</text>`;
    out += `<text x="${x}" y="1652" text-anchor="middle">${mm}</text>`;
}
for (let mm = -80; mm <= 480; mm += 80) {
    const y = mm < 0 ? 308 : 492 + mm * STEP / 10;
    out += `<text x="220" y="${y}">${mm}</text>`;
    out += `<text x="1897" y="${y}" text-anchor="end">${mm}</text>`;
}

out += `<rect x="247" y="483" width="1626" height="936" fill="none" stroke="#000" stroke-width="2"/>`;
out += `<rect x="248" y="482" width="12" height="14" fill="#b00000"/>`;
out += `<rect x="239" y="474" width="18" height="16" fill="#00c000" fill-opacity="0.5" stroke="#3c9c3c" stroke-width="2"/>`;
out += `<text class="axis" x="299" y="478">X</text><text class="axis" x="233" y="543">Y</text>`;

document.getElementById("canvas").innerHTML = out;
```
